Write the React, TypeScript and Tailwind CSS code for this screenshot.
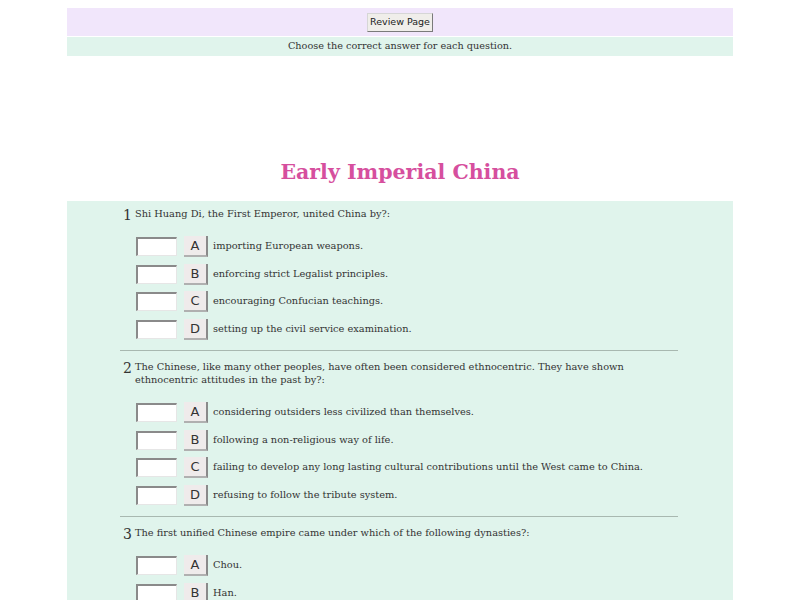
import React from "react";

type Q = { n: number; text: string[]; opts: string[] };

const questions: Q[] = [
  {
    n: 1,
    text: ["Shi Huang Di, the First Emperor, united China by?:"],
    opts: [
      "importing European weapons.",
      "enforcing strict Legalist principles.",
      "encouraging Confucian teachings.",
      "setting up the civil service examination.",
    ],
  },
  {
    n: 2,
    text: [
      "The Chinese, like many other peoples, have often been considered ethnocentric. They have shown",
      "ethnocentric attitudes in the past by?:",
    ],
    opts: [
      "considering outsiders less civilized than themselves.",
      "following a non-religious way of life.",
      "failing to develop any long lasting cultural contributions until the West came to China.",
      "refusing to follow the tribute system.",
    ],
  },
  {
    n: 3,
    text: ["The first unified Chinese empire came under which of the following dynasties?:"],
    opts: ["Chou.", "Han.", "Ch'in.", "Shang."],
  },
];

const letters = ["A", "B", "C", "D"];

function Option({ letter, text }: { letter: string; text: string }) {
  return (
    <div className="flex items-center h-[27.5px]">
      <div className="w-[41px] h-[19px] bg-white border-t-2 border-l-2 border-t-[#8a8a8a] border-l-[#8a8a8a] border-r border-b border-r-[#e6e6e6] border-b-[#e6e6e6]" />
      <div className="ml-[7px] w-[24px] h-[21px] bg-[#efebeb] border-r-2 border-b-2 border-r-[#8a8a8a] border-b-[#b0b0b0] flex items-center justify-center text-[13px] text-[#333] font-['DejaVu_Sans',sans-serif]">
        {letter}
      </div>
      <div className="ml-[5px] text-[9.8px] text-[#333]">{text}</div>
    </div>
  );
}

export default function App() {
  return (
    <div className="w-[800px] h-[600px] overflow-hidden bg-white font-['DejaVu_Serif',serif]">
      <div className="mx-[67px] mt-[8px]">
        <div className="h-[28px] bg-[#f1e6fb] flex items-center justify-center">
          <button className="h-[19px] px-[2px] bg-[#f0eeea] border border-[#d6d6d6] border-r-[#7a7a7a] border-b-[#7a7a7a] text-[9.5px] text-[#222] font-['DejaVu_Sans',sans-serif] leading-none">
            Review Page
          </button>
        </div>
        <div className="mt-[1px] h-[19px] bg-[#e0f4ec] flex items-center justify-center text-[9.7px] text-[#333]">
          Choose the correct answer for each question.
        </div>
      </div>
      <div className="h-[145px] flex items-end justify-center pb-[19px]">
        <h1 className="text-[20.5px] font-bold text-[#d64f9e] leading-none">Early Imperial China</h1>
      </div>
      <div className="mx-[67px] bg-[#e0f4ec] h-[500px] pt-[6px]">
        {questions.map((q, i) => (
          <div key={q.n}>
            {i > 0 && <div className="ml-[53px] w-[558px] h-[1px] bg-[#a8b8b0] mt-[7px] mb-[9px]" />}
            <div className="flex items-start pl-[56px]">
              <div className="text-[14px] text-[#333] w-[12px] leading-[14px] h-[12px] mt-[1px]">{q.n}</div>
              <div className="text-[9.8px] text-[#333] leading-[13px]">
                {q.text.map((t) => (
                  <div key={t}>{t}</div>
                ))}
              </div>
            </div>
            <div className="pl-[69px] mt-[13px]">
              {q.opts.map((o, j) => (
                <Option key={o} letter={letters[j]} text={o} />
              ))}
            </div>
          </div>
        ))}
      </div>
    </div>
  );
}
